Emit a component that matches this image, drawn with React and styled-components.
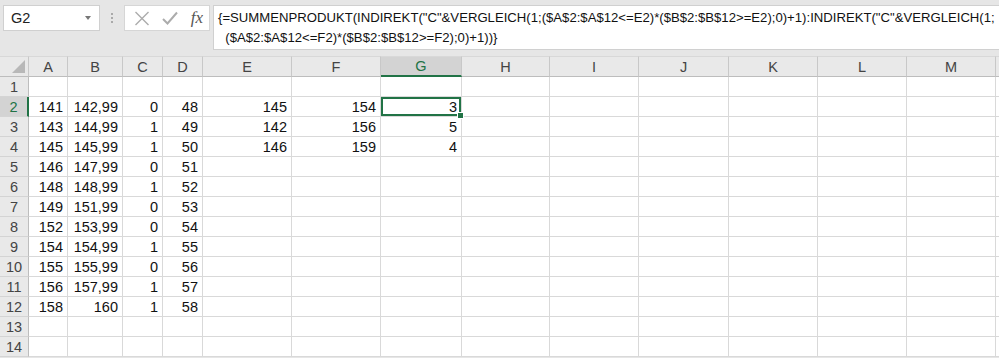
import React from "react";
import styled, { createGlobalStyle } from "styled-components";

const GlobalStyle = createGlobalStyle`
  html, body {
    margin: 0;
    padding: 0;
    background: #e6e6e6;
  }
  * {
    box-sizing: border-box;
  }
`;

const COLS = [
  { name: "A", width: 39 },
  { name: "B", width: 55 },
  { name: "C", width: 40 },
  { name: "D", width: 40 },
  { name: "E", width: 89 },
  { name: "F", width: 89 },
  { name: "G", width: 81 },
  { name: "H", width: 88 },
  { name: "I", width: 89 },
  { name: "J", width: 90 },
  { name: "K", width: 89 },
  { name: "L", width: 89 },
  { name: "M", width: 89 },
];

const DATA = {
  2: ["141", "142,99", "0", "48", "145", "154", "3"],
  3: ["143", "144,99", "1", "49", "142", "156", "5"],
  4: ["145", "145,99", "1", "50", "146", "159", "4"],
  5: ["146", "147,99", "0", "51"],
  6: ["148", "148,99", "1", "52"],
  7: ["149", "151,99", "0", "53"],
  8: ["152", "153,99", "0", "54"],
  9: ["154", "154,99", "1", "55"],
  10: ["155", "155,99", "0", "56"],
  11: ["156", "157,99", "1", "57"],
  12: ["158", "160", "1", "58"],
};

const ROWS = Array.from({ length: 14 }, (_, i) => i + 1);

const Page = styled.div`
  width: 999px;
  height: 358px;
  overflow: hidden;
  background: #e6e6e6;
  font-family: "Liberation Sans", Arial, sans-serif;
  color: #000;
`;

const FormulaBar = styled.div`
  display: flex;
  align-items: flex-start;
  height: 56px;
  padding: 5px 0 0 3px;
`;

const NameBox = styled.div`
  width: 97px;
  height: 26px;
  background: #fff;
  border: 1px solid #d0d0d0;
  display: flex;
  align-items: center;
  justify-content: space-between;
  padding: 0 8px 0 7px;
  font-size: 14.5px;
  color: #222;
`;

const DropArrow = styled.span`
  width: 0;
  height: 0;
  border-left: 3px solid transparent;
  border-right: 3px solid transparent;
  border-top: 4px solid #777;
`;

const Dots = styled.div`
  width: 24px;
  height: 26px;
  display: flex;
  flex-direction: column;
  align-items: center;
  justify-content: center;
  gap: 2px;

  span {
    width: 2px;
    height: 2px;
    background: #aaa;
  }
`;

const ButtonBox = styled.div`
  width: 86px;
  height: 26px;
  background: #fff;
  border: 1px solid #d6d6d6;
  display: flex;
  align-items: center;
  justify-content: space-between;
  padding: 0 6px 0 9px;
`;

const FxLabel = styled.span`
  font-family: "Liberation Serif", "Times New Roman", serif;
  font-style: italic;
  font-size: 17px;
  color: #555;
`;

const FormulaInput = styled.div`
  flex: 1;
  height: 45px;
  margin-left: 3px;
  background: #fff;
  border: 1px solid #d0d0d0;
  border-right: none;
  padding: 2px 0 0 4px;
  font-size: 13.15px;
  line-height: 20px;
  white-space: pre;
  color: #111;
`;

const Grid = styled.div`
  display: grid;
  grid-template-columns: 29px ${COLS.map((c) => `${c.width}px`).join(" ")} 1fr;
  grid-auto-rows: 20px;
  grid-template-rows: 21px;
  background: #fff;
  font-size: 14.5px;
`;

const Corner = styled.div`
  background: #e9e9e9;
  border-right: 1px solid #c8c8c8;
  border-bottom: 1px solid #bdbdbd;
  border-top: 1px solid #d8d8d8;
  position: relative;

  &::after {
    content: "";
    position: absolute;
    right: 3px;
    bottom: 3px;
    border-left: 13px solid transparent;
    border-bottom: 13px solid #b8b8b8;
  }
`;

const ColHeader = styled.div`
  display: flex;
  align-items: center;
  justify-content: center;
  background: ${(p) => (p.$active ? "#d3d3d3" : "#e9e9e9")};
  color: ${(p) => (p.$active ? "#217346" : "#444")};
  border-top: 1px solid #d8d8d8;
  border-right: 1px solid #c8c8c8;
  border-bottom: ${(p) => (p.$active ? "2px solid #217346" : "1px solid #bdbdbd")};
`;

const RowHeader = styled.div`
  display: flex;
  align-items: center;
  justify-content: center;
  background: ${(p) => (p.$active ? "#d3d3d3" : "#e9e9e9")};
  color: ${(p) => (p.$active ? "#217346" : "#444")};
  border-bottom: 1px solid #d4d4d4;
  border-right: ${(p) => (p.$active ? "2px solid #217346" : "1px solid #bdbdbd")};
`;

const Cell = styled.div`
  position: relative;
  display: flex;
  align-items: center;
  justify-content: flex-end;
  padding-right: 4px;
  border-right: 1px solid #d9d9d9;
  border-bottom: 1px solid #d9d9d9;
  color: #111;
  ${(p) =>
    p.$selected &&
    `
    box-shadow: inset 0 0 0 2px #217346;
    &::after {
      content: "";
      position: absolute;
      right: -3px;
      bottom: -3px;
      width: 5px;
      height: 5px;
      background: #217346;
      border: 1px solid #fff;
      z-index: 2;
    }
  `}
`;

const CrossIcon = () => (
  <svg width="16" height="15" viewBox="0 0 16 15">
    <path d="M1.5 1 L14.5 14 M14.5 1 L1.5 14" stroke="#acacac" strokeWidth="1.4" fill="none" />
  </svg>
);

const CheckIcon = () => (
  <svg width="16" height="14" viewBox="0 0 16 14">
    <path d="M1 8 L5.5 12.5 L15 1.5" stroke="#acacac" strokeWidth="2" fill="none" />
  </svg>
);

const LINE1 =
  '{=SUMMENPRODUKT(INDIREKT("C"&VERGLEICH(1;($A$2:$A$12<=E2)*($B$2:$B$12>=E2);0)+1):INDIREKT("C"&VERGLEICH(1;';
const LINE2 = '  ($A$2:$A$12<=F2)*($B$2:$B$12>=F2);0)+1))}';

const App = () => {
  return (
    <Page>
      <GlobalStyle />
      <FormulaBar>
        <NameBox>
          G2
          <DropArrow />
        </NameBox>
        <Dots>
          <span />
          <span />
          <span />
        </Dots>
        <ButtonBox>
          <CrossIcon />
          <CheckIcon />
          <FxLabel>fx</FxLabel>
        </ButtonBox>
        <FormulaInput>
          {LINE1}
          {"\n"}
          {LINE2}
        </FormulaInput>
      </FormulaBar>
      <Grid>
        <Corner />
        {COLS.map((c) => (
          <ColHeader key={c.name} $active={c.name === "G"}>
            {c.name}
          </ColHeader>
        ))}
        <ColHeader />
        {ROWS.map((r) => (
          <React.Fragment key={r}>
            <RowHeader $active={r === 2}>{r}</RowHeader>
            {COLS.map((c, i) => (
              <Cell key={c.name} $selected={r === 2 && c.name === "G"}>
                {DATA[r] && DATA[r][i]}
              </Cell>
            ))}
            <Cell />
          </React.Fragment>
        ))}
      </Grid>
    </Page>
  );
};

export default App;
